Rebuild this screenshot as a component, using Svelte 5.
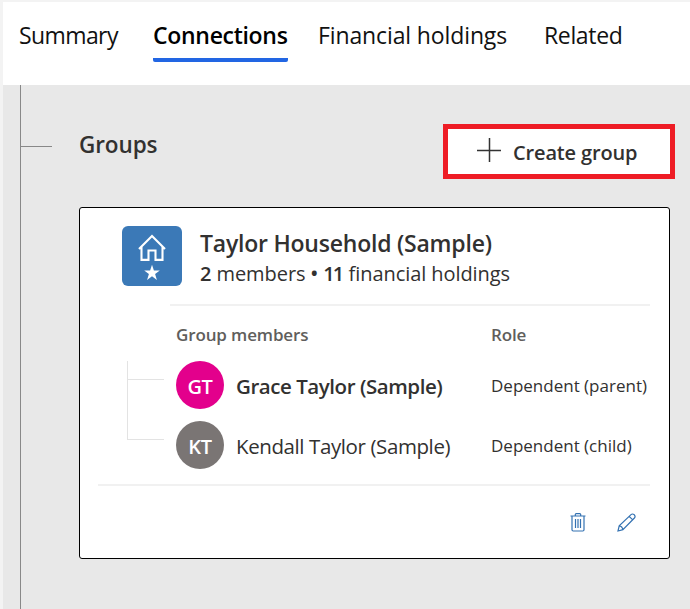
<script>
  const tabs = [
    { label: 'Summary', width: 100, space: -0.6 },
    { label: 'Connections', width: 135, space: -0.3, active: true },
    { label: 'Financial holdings', width: 190, space: -0.12 },
    { label: 'Related', width: 80, space: -0.35 }
  ];
  const members = [
    { initials: 'GT', name: 'Grace Taylor (Sample)', role: 'Dependent (parent)', color: '#e3008c', primary: true },
    { initials: 'KT', name: 'Kendall Taylor (Sample)', role: 'Dependent (child)', color: '#7a7574' }
  ];
</script>

<div class="page">
  <nav>
    {#each tabs as tab}
      <div class="tab" class:active={tab.active} style="width:{tab.width}px;letter-spacing:{tab.space}px">{tab.label}</div>
    {/each}
  </nav>
  <main>
    <div class="rail"><span></span></div>
    <section>
      <header>
        <h2>Groups</h2>
        <button>
          <svg width="24" height="24" viewBox="0 0 24 24"><path d="M12.5 0v24M0 12.5h24" stroke="#333" stroke-width="1.5" fill="none" /></svg>
          <span>Create group</span>
        </button>
      </header>
      <article>
        <div class="head">
          <div class="tile">
            <svg width="60" height="60" viewBox="0 0 60 60">
              <path d="M17 23 30 10 43 23M19.5 21v12.9h7v-9.4h7v9.4h7V21" fill="none" stroke="#fff" stroke-width="2.1" />
              <path d="m30 38.800 1.900 5.700h5.900l-4.700 3.500 1.800 5.900-4.900-3.600-4.900 3.600 1.800-5.900-4.700-3.500h5.900z" fill="#fff" />
            </svg>
          </div>
          <div class="titles">
            <h3>Taylor Household (Sample)</h3>
            <p><b>2</b> members <b>•</b> <b class="count">11</b> financial holdings</p>
          </div>
        </div>
        <div class="rule top"></div>
        <div class="columns"><span class="c1">Group members</span><span>Role</span></div>
        <div class="members">
          <div class="tree"><i></i><i></i></div>
          <div class="rows">
            {#each members as m}
              <div class="row">
                <div class="avatar" style="background:{m.color}">{m.initials}</div>
                <div class="name" class:primary={m.primary}>{m.name}</div>
                <div class="role">{m.role}</div>
              </div>
            {/each}
          </div>
        </div>
        <div class="rule"></div>
        <footer>
          <svg width="16" height="19" viewBox="0 0 16 19" fill="none" stroke="#3472b2" stroke-width="1.2">
            <path d="M.5 3h15M5.3 3V1.6q0-.9.9-.9h3.6q.9 0 .9.9V3M2 3v13.8q0 1.2 1.2 1.2h9.6q1.2 0 1.2-1.2V3M5.5 6v9M8 6v9M10.500 6v9" />
          </svg>
          <svg width="19" height="19" viewBox="0 0 19 19" fill="none" stroke="#3472b2" stroke-width="1.2">
            <path d="M1 18 2.200 12.800 14 1.600Q15.500.300 17.300 1.800 18.800 3.500 17.400 5L5.900 16.700ZM2.200 12.800Q5.300 13.200 5.900 16.700M12.200 3.300l3.500 3.500" />
          </svg>
        </footer>
      </article>
    </section>
  </main>
</div>

<style>
  :global(body) { background: #f3f3f3; }
  * { box-sizing: border-box; }
  .page { width: 690px; height: 609px; padding: 2px 0 0 3px; font-family: "Open Sans", "Noto Sans", sans-serif; color: #323130; white-space: nowrap; overflow: hidden; }
  nav { height: 83px; background: #fff; padding: 15px 0 0 16px; display: flex; }
  .tab { height: 45px; font-size: 23px; line-height: 36px; color: #111; margin-right: 30px; }
  .tab:first-child { margin-right: 34px; }
  .tab:nth-child(3) { margin-right: 36px; }
  .tab.active { font-weight: 600; color: #000; border-bottom: 4px solid #2266e3; border-radius: 2px; }
  main { height: 524px; background: #e8e8e8; display: flex; padding-left: 17px; }
  .rail { width: 59px; border-left: 1px solid #888; padding-top: 61px; }
  .rail span { display: block; width: 31px; height: 1px; background: #888; }
  section { width: 596px; padding-top: 39px; }
  header { display: flex; justify-content: space-between; height: 83px; }
  h2, h3, p { margin: 0; }
  h2 { font-size: 22.500px; line-height: 32px; font-weight: 600; padding-top: 5px; letter-spacing: -.1px; }
  button { width: 232px; height: 55px; border: 5px solid #ee1c25; background: #fff; padding: 0 0 0 29px; display: flex; align-items: center; gap: 12px; font: 600 20px "Open Sans", "Noto Sans", sans-serif; letter-spacing: -.15px; color: #323130; }
  button svg { margin-top: -3px; }
  button span { padding-top: 2px; }
  article { width: 591px; height: 352px; background: #fff; border: 1px solid #000; border-radius: 3px; padding-top: 18px; }
  .head { display: flex; height: 78px; padding-left: 42px; }
  .tile { width: 60px; height: 60px; background: #3b79b7; border-radius: 6px; margin-right: 18px; }
  .tile svg { display: block; }
  h3 { font-size: 23px; line-height: 34px; font-weight: 600; letter-spacing: -.22px; }
  p { font-size: 20px; line-height: 28px; letter-spacing: -.07px; }
  p b { font-weight: 600; }
  p .count { letter-spacing: -1.800px; margin-right: 1px; }
  .rule { height: 2px; background: #f1f1f1; margin: 0 19px 0 18px; }
  .rule.top { margin-left: 90px; }
  .columns { display: flex; padding-left: 96px; height: 55px; font-size: 17px; font-weight: 600; line-height: 58px; color: #605e5c; letter-spacing: -.13px; }
  .c1 { width: 315px; }
  .members { display: flex; padding-left: 47px; height: 123px; }
  .tree { width: 37px; height: 79px; border-left: 1px solid #e3e3e3; display: flex; flex-direction: column; }
  .tree i { display: block; height: 19px; border-bottom: 1px solid #e3e3e3; }
  .tree i + i { height: 60px; }
  .rows { margin-left: 12px; }
  .row { display: flex; height: 60px; }
  .avatar { width: 48px; height: 48px; border-radius: 50%; color: #fff; font-size: 20px; font-weight: 600; line-height: 51px; text-align: center; letter-spacing: -.3px; }
  .name { width: 255px; margin-left: 12px; font-size: 20.500px; line-height: 51px; letter-spacing: -.4px; }
  .name.primary { font-weight: 600; letter-spacing: -.45px; }
  .role { font-size: 17px; line-height: 50px; letter-spacing: 0; }
  footer { display: flex; justify-content: flex-end; gap: 31px; padding: 27px 33px 0 0; }
</style>
